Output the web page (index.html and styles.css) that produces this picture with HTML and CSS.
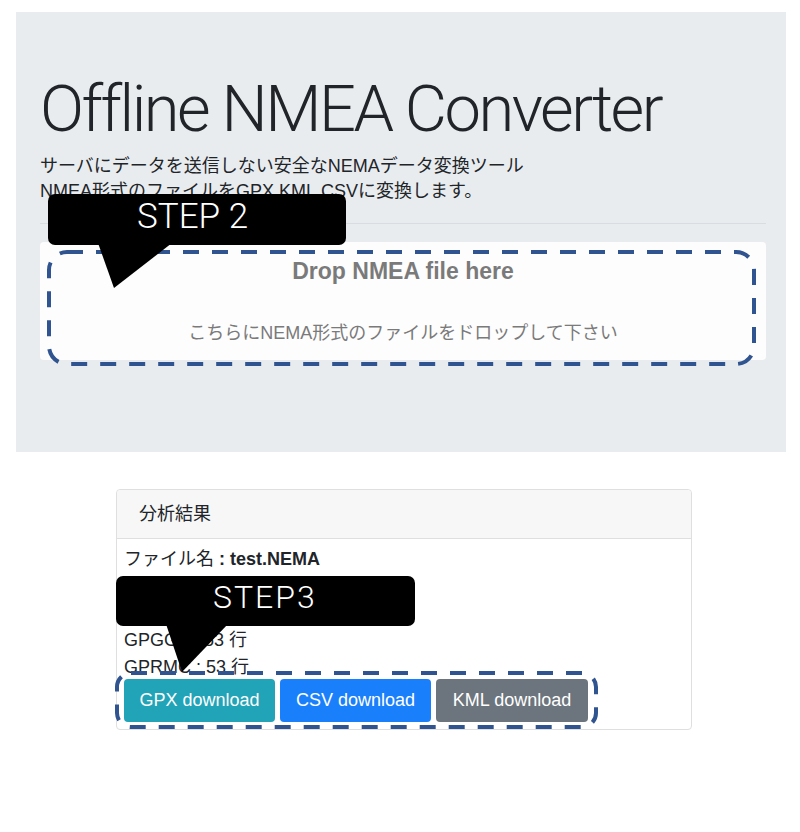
FILE: index.html
```html
<!DOCTYPE html>
<html lang="ja">
<head>
<meta charset="utf-8">
<title>Offline NMEA Converter</title>
<link rel="stylesheet" href="styles.css">
</head>
<body>
<div class="page">
  <section class="jumbotron">
    <h1 class="title">Offline NMEA Converter</h1>
    <p class="lead">サーバにデータを送信しない安全なNEMAデータ変換ツール<br>NMEA形式のファイルをGPX,KML,CSVに変換します。</p>
    <hr class="divider">
    <div class="dropzone">
      <div class="drop-title">Drop NMEA file here</div>
      <div class="drop-sub">こちらにNEMA形式のファイルをドロップして下さい</div>
    </div>
  </section>

  <section class="card">
    <div class="card-header">分析結果</div>
    <div class="card-body">
      <div class="line">ファイル名 <b>: test.NEMA</b></div>
      <div class="line">全行数 : 159 行</div>
      <div class="line">GPGSA : 53 行</div>
      <div class="line">GPGGA : 53 行</div>
      <div class="line">GPRMC : 53 行</div>
      <div class="buttons">
        <button class="btn btn-gpx">GPX download</button>
        <button class="btn btn-csv">CSV download</button>
        <button class="btn btn-kml">KML download</button>
      </div>
    </div>
  </section>

  <svg class="annotations" width="800" height="832" viewBox="0 0 800 832">
    <rect x="49" y="252" width="705" height="112" rx="18" ry="18" class="dash"/>
    <rect x="117" y="673" width="479" height="54" rx="14" ry="14" class="dash"/>
    <rect x="48" y="194" width="298" height="51" rx="7" ry="7" class="callout"/>
    <polygon points="98,243 172,243 114,288" class="callout"/>
    <text x="137" y="228" class="step step2">STEP 2</text>
    <rect x="116" y="576" width="299" height="50" rx="7" ry="7" class="callout"/>
    <polygon points="166,624 228,624 182,672" class="callout"/>
    <text x="213" y="608" class="step step3">STEP3</text>
  </svg>
</div>
</body>
</html>
```
FILE: styles.css
```css
* { box-sizing: border-box; }
html, body { margin: 0; padding: 0; background: #fff; }
body {
  font-family: "Liberation Sans", "Noto Sans CJK JP", sans-serif;
  color: #212529;
}
.page {
  position: relative;
  width: 800px;
  height: 832px;
  overflow: hidden;
}
.jumbotron {
  margin: 12px 14px 0 16px;
  height: 440px;
  padding: 64px 20px 0 24px;
  background: #e9ecef;
}
.title {
  margin: 0;
  font-family: Roboto, "Liberation Sans", sans-serif;
  font-weight: 300;
  font-size: 65px;
  line-height: 66px;
  color: #212529;
  letter-spacing: -2.5px;
}
.lead {
  margin: 12px 0 0;
  font-size: 18px;
  line-height: 25px;
  color: #212529;
}
.divider {
  margin: 19px 0 0;
  border: 0;
  border-top: 1px solid #d9dce0;
  height: 0;
}
.dropzone {
  margin-top: 18px;
  height: 118px;
  background: #fdfdfd;
  border-radius: 4px;
  text-align: center;
  color: #7a7a7a;
  padding-top: 14px;
}
.drop-title {
  font-weight: bold;
  font-size: 23px;
  line-height: 30px;
}
.drop-sub {
  margin-top: 34px;
  font-size: 18px;
  line-height: 26px;
}
.card {
  margin: 37px 0 0 116px;
  width: 576px;
  border: 1px solid #dfdfdf;
  border-radius: 4px;
  background: #fff;
}
.card-header {
  padding: 12px 20px 12px 22px;
  font-size: 18px;
  line-height: 24px;
  background: #f7f7f7;
  border-bottom: 1px solid #dfdfdf;
  border-radius: 4px 4px 0 0;
}
.card-body {
  padding: 7px 6px 7px 7px;
}
.line {
  font-size: 18px;
  line-height: 27px;
}
.line b { font-weight: bold; }
.buttons {
  display: flex;
  gap: 5px;
  margin-top: -2px;
}
.btn {
  font-family: "Liberation Sans", sans-serif;
  font-size: 18px;
  line-height: 25px;
  padding: 8px 0;
  border: 1px solid transparent;
  border-radius: 4px;
  color: #fff;
  cursor: pointer;
}
.btn-gpx { background: #21a3b8; width: 151px; }
.btn-csv { background: #1a7ffb; width: 151px; }
.btn-kml { background: #6c757d; width: 152px; }
.annotations {
  position: absolute;
  top: 0;
  left: 0;
  pointer-events: none;
}
.dash {
  fill: none;
  stroke: #2f548f;
  stroke-width: 4;
  stroke-dasharray: 16 13;
}
.callout { fill: #000; }
.step {
  fill: #fff;
  font-family: Roboto, "Liberation Sans", sans-serif;
  font-weight: 300;
}
.step2 { font-size: 35px; }
.step3 { font-size: 32px; letter-spacing: 2px; }
```
